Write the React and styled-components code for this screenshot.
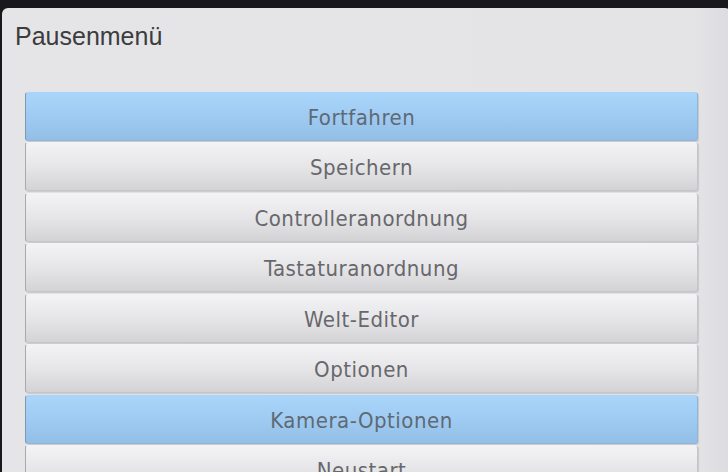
import React from 'react';
import styled, { createGlobalStyle } from 'styled-components';

const GlobalStyle = createGlobalStyle`
html, body {
margin:0;
padding:0;
background:#19191d;
overflow:hidden;
}
`;

const items = [
  { label: 'Fortfahren', active: true },
  { label: 'Speichern' },
  { label: 'Controlleranordnung' },
  { label: 'Tastaturanordnung' },
  { label: 'Welt-Editor' },
  { label: 'Optionen' },
  { label: 'Kamera-Optionen', active: true },
  { label: 'Neustart' },
];

function App() {
  return (
    <Screen>
      <GlobalStyle />
      <TopBar />
      <Panel>
        <Title>Pausenmenü</Title>
        <MenuList>
          {items.map((item) => (
            <MenuButton key={item.label} $active={item.active}>
              {item.label}
            </MenuButton>
          ))}
        </MenuList>
      </Panel>
    </Screen>
  );
}

export default App;

const Screen = styled.div`
width:728px;
height:472px;
display:flex;
flex-direction:column;
overflow:hidden;
background:#19191d;
`;

const TopBar = styled.div`
height:8px;
flex-shrink:0;
`;

const Panel = styled.div`
flex:1;
margin-left:2px;
width:729px;
background:linear-gradient(to right, #e5e5e8 0%, #e4e4e7 95%, #dcdce0 100%);
border-radius:6px 6px 0 0;
display:flex;
flex-direction:column;
`;

const Title = styled.div`
height:84px;
padding:16px 0 0 13px;
box-sizing:border-box;
font-family:"Liberation Sans", Arial, sans-serif;
font-size:25px;
line-height:25px;
color:#3c3c3e;
`;

const MenuList = styled.div`
display:flex;
flex-direction:column;
gap:1.43px;
padding-left:23px;
width:673px;
`;

const MenuButton = styled.div`
height:49px;
flex-shrink:0;
box-sizing:border-box;
padding-top:2px;
display:flex;
align-items:center;
justify-content:center;
border-radius:3px;
border:1px solid ${(p) => (p.$active ? '#8fb6da' : '#c6c6ca')};
border-left-color:${(p) => (p.$active ? '#7d98b0' : '#a9a9ad')};
border-top-color:${(p) => (p.$active ? '#a9d5fa' : '#f2f2f4')};
background:${(p) =>
  p.$active
    ? 'linear-gradient(to bottom, #a9d5fa 0%, #9fcbf3 50%, #93bfe7 100%)'
    : 'linear-gradient(to bottom, #f3f3f5 0%, #e6e6e9 50%, #d3d3d6 100%)'};
box-shadow:1px 1px 1px rgba(0,0,0,0.12);
font-family:"DejaVu Sans Condensed", "Liberation Sans Narrow", sans-serif;
font-size:22px;
letter-spacing:0.5px;
color:${(p) => (p.$active ? '#5e6a74' : '#68686c')};
`;
